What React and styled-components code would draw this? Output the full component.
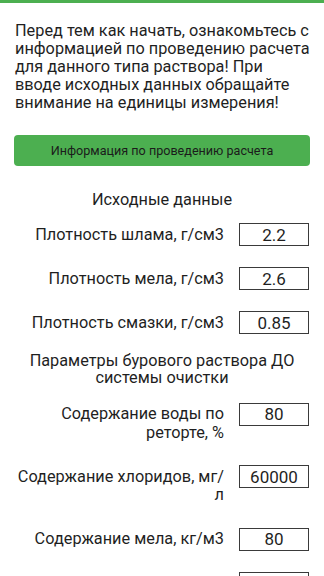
import styled, { createGlobalStyle } from "styled-components";

const GlobalStyle = createGlobalStyle`
body{
    margin: 0;
    background: #fff;
    font-family: Roboto, "Noto Sans", sans-serif;
    color: #1f1f1f;
}
`

const rows = [
    { label: "Плотность шлама, г/см3", value: "2.2" },
    { label: "Плотность мела, г/см3", value: "2.6" },
    { label: "Плотность смазки, г/см3", value: "0.85" },
]

const rowsBefore = [
    { label: "Содержание воды по реторте, %", value: "80" },
    { label: "Содержание хлоридов, мг/\u200Bл", value: "60000" },
    { label: "Содержание мела, кг/м3", value: "80" },
    { label: "Содержание смазки, %", value: "2" },
]

const Field = ({ label, value }) => (
    <Row>
        <Label>{label}</Label>
        <Input defaultValue={value} />
    </Row>
)

const App = () => {

    return (
        <Page>
            <GlobalStyle />
            <TopBar />
            <Intro>
                Перед тем как начать, ознакомьтесь с информацией по проведению расчета
                для данного типа раствора! При вводе исходных данных обращайте внимание
                на единицы измерения!
            </Intro>

            <InfoButton>Информация по проведению расчета</InfoButton>

            <SectionTitle>Исходные данные</SectionTitle>
            {rows.map((r) => <Field key={r.label} {...r} />)}

            <SectionTitle $compact>Параметры бурового раствора ДО системы очистки</SectionTitle>
            {rowsBefore.map((r) => <Field key={r.label} {...r} />)}
        </Page>
    )
}

const Page = styled.div`
width: 324px;
height: 576px;
overflow: hidden;
`

const TopBar = styled.div`
height: 3px;
background-color: #4caf50;
`

const Intro = styled.p`
margin: 0;
padding: 18.5px 14px 0 15px;
font-size: 16.3px;
line-height: 18px;
`

const InfoButton = styled.button`
display: flex;
align-items: center;
justify-content: center;
box-sizing: border-box;
width: calc(100% - 28px);
height: 31px;
margin: 23.5px 14px 0;
background-color: #4caf50;
border: none;
border-radius: 4px;
font-family: Roboto, sans-serif;
font-size: 12.6px;
color: #1b1b1b;
`

const SectionTitle = styled.h3`
margin: ${(p) => (p.$compact ? "18.5px 15px 16.5px" : "25px 15px 14px")};
font-weight: normal;
font-size: 16.3px;
line-height: ${(p) => (p.$compact ? "16.5px" : "18px")};
text-align: center;
`

const Row = styled.div`
display: flex;
align-items: flex-start;
gap: 15px;
padding: 0 15px;
& + & {
    margin-top: 20.5px;
}
`

const Label = styled.span`
flex: 1;
padding: 2.5px 0;
text-align: right;
font-size: 16.3px;
line-height: 18.5px;
`

const Input = styled.input`
box-sizing: border-box;
width: 70px;
height: 23px;
flex: none;
border: 1px solid #3a3a3a;
border-radius: 0;
padding: 0;
text-align: center;
font-family: Roboto, sans-serif;
font-size: 17px;
color: #1f1f1f;
outline: none;
`

export default App
